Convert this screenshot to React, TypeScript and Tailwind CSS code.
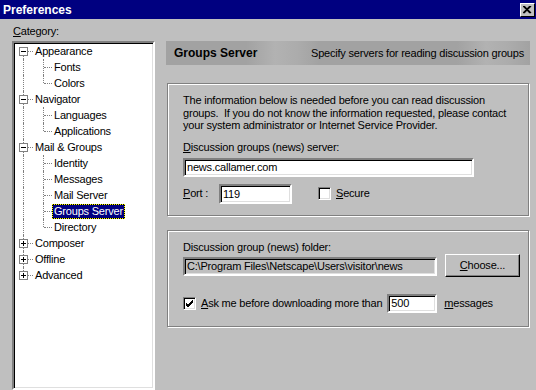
import React from 'react';

const sunken =
    'border border-t-[#808080] border-l-[#808080] border-r-white border-b-white shadow-[inset_1px_1px_0_#000,inset_-1px_-1px_0_#dfdfdf]';
const etched = 'border border-[#808080] shadow-[inset_1px_1px_0_#fff,1px_1px_0_#fff]';

type Item = { label: string; level: 0 | 1; sign?: '-' | '+'; lastChild?: boolean; selected?: boolean };

const items: Item[] = [
    { label: 'Appearance', level: 0, sign: '-' },
    { label: 'Fonts', level: 1 },
    { label: 'Colors', level: 1, lastChild: true },
    { label: 'Navigator', level: 0, sign: '-' },
    { label: 'Languages', level: 1 },
    { label: 'Applications', level: 1, lastChild: true },
    { label: 'Mail & Groups', level: 0, sign: '-' },
    { label: 'Identity', level: 1 },
    { label: 'Messages', level: 1 },
    { label: 'Mail Server', level: 1 },
    { label: 'Groups Server', level: 1, selected: true },
    { label: 'Directory', level: 1, lastChild: true },
    { label: 'Composer', level: 0, sign: '+' },
    { label: 'Offline', level: 0, sign: '+' },
    { label: 'Advanced', level: 0, sign: '+' },
]

const Expander = ({ sign }: { sign: '-' | '+' }) => (
    <span className="absolute left-[5px] top-[4px] w-[9px] h-[9px] border border-[#808080] bg-white">
        <span className="absolute left-[1px] top-[3px] w-[5px] h-px bg-black" />
        {sign === '+' && <span className="absolute left-[3px] top-[1px] w-px h-[5px] bg-black" />}
    </span>
)

const TreeRow = ({ item, index }: { item: Item; index: number }) => {
    const first = index === 0
    const last = index === items.length - 1
    return (
        <div className="relative h-4 flex items-center">
            <span
                className={`absolute left-[9px] border-l border-dotted border-[#808080] ${first ? 'top-[8px] bottom-0' : last ? 'top-0 h-[8px]' : 'top-0 bottom-0'}`}
            />
            {item.level === 0 ? (
                <>
                    <span className="absolute left-[14px] top-[8px] w-[5px] border-t border-dotted border-[#808080]" />
                    <Expander sign={item.sign!} />
                    <span className="pl-[21px] text-black">{item.label}</span>
                </>
            ) : (
                <>
                    <span
                        className={`absolute left-[29px] top-0 border-l border-dotted border-[#808080] ${item.lastChild ? 'h-[8px]' : 'bottom-0'}`}
                    />
                    <span className="absolute left-[30px] top-[8px] w-[8px] border-t border-dotted border-[#808080]" />
                    {item.selected ? (
                        <span className="ml-[38px] bg-black">
                            <span className="block px-[1px] leading-[13px] bg-[#000080] bg-clip-padding text-white border border-dotted border-[#ffff00]">
                                {item.label}
                            </span>
                        </span>
                    ) : (
                        <span className="ml-[38px] px-[2px] leading-[14px] text-black">{item.label}</span>
                    )}
                </>
            )}
        </div>
    )
}

const Checkbox = ({ checked }: { checked?: boolean }) => (
    <span className={`relative inline-block w-[13px] h-[13px] bg-white ${sunken}`}>
        {checked && (
            <svg className="absolute left-[1px] top-[1px]" width="9" height="9" viewBox="0 0 9 9">
                <path d="M1 4 L3 6 L8 1 M1 5 L3 7 L8 2 M1 6 L3 8 L8 3" stroke="#000" strokeWidth="1" fill="none" />
            </svg>
        )}
    </span>
)

export default function App() {
    return (
        <div
            className="w-[536px] h-[390px] overflow-hidden bg-[#bfbfbf] text-[11px] tracking-[-0.2px] text-black flex flex-col"
            style={{ fontFamily: '"Liberation Sans", Arial, sans-serif' }}
        >
            {/* title bar */}
            <div className="h-[19px] bg-[#000080] flex items-center justify-between pl-[3px] pr-[1px]">
                <span className="text-white font-bold text-[12px] tracking-normal">Preferences</span>
                <span className="w-[15px] h-[14px] bg-[#bfbfbf] border border-t-white border-l-white border-r-black border-b-black flex items-center justify-center">
                    <svg width="9" height="8" viewBox="0 0 9 8">
                        <path d="M1 0 L8 7 M0 0 L7 7 M8 0 L1 7 M7 0 L0 7" stroke="#000" strokeWidth="1.2" />
                    </svg>
                </span>
            </div>

            <div className="flex flex-1 min-h-0">
                {/* category tree */}
                <div className="ml-[12px] w-[143px] flex flex-col">
                    <div className="h-[22px] pt-[6px] pl-[1px] leading-[13px]">
                        <span className="underline">C</span>ategory:
                    </div>
                    <div className={`flex-1 bg-white ${sunken} border-[2px] h-[348px]`}>
                        {items.map((it, i) => <TreeRow key={it.label} item={it} index={i} />)}
                    </div>
                </div>

                {/* right side */}
                <div className="ml-[11px] w-[364px] pt-[22px] flex flex-col">
                    <div className="h-[24px] flex items-center whitespace-nowrap bg-[linear-gradient(90deg,#a2a2a2_0%,#a2a2a2_22%,#b2b2b2_30%,#acacac_36%,#a2a2a2_42%,#a2a2a2_80%,#b2b2b2_88%,#acacac_94%,#a2a2a2_100%)]">
                        <span className="w-[145px] pl-[8px] font-bold text-[12px] tracking-normal">Groups Server</span>
                        <span>Specify servers for reading discussion groups</span>
                    </div>

                    <div className={`mt-[18px] ml-px w-[362px] h-[133px] ${etched} pl-[15px] pt-[10px]`}>
                        <p className="leading-[12.5px] w-[340px]">
                            The information below is needed before you can read discussion groups.&nbsp; If you do not know the information requested, please contact your system administrator or Internet Service Provider.
                        </p>
                        <div className="mt-[9px] leading-[13px]">
                            <span className="underline">D</span>iscussion groups (news) server:
                        </div>
                        <div className={`mt-[4px] w-[291px] h-[19px] bg-white ${sunken} border-[2px] pl-[2px] leading-[15px]`}>
                            news.callamer.com
                        </div>
                        <div className="mt-[7px] flex items-center h-[20px]">
                            <span className="w-[36px]"><span className="underline">P</span>ort :</span>
                            <span className={`w-[73px] h-[20px] bg-white ${sunken} border-[2px] pl-[2px] leading-[16px]`}>119</span>
                            <span className="ml-[26px] flex items-center gap-[5px]">
                                <Checkbox />
                                <span><span className="underline">S</span>ecure</span>
                            </span>
                        </div>
                    </div>

                    <div className={`mt-[14px] ml-px w-[362px] h-[97px] ${etched} pl-[15px] pt-[10px]`}>
                        <div className="leading-[13px]">Discussion group (news) folder:</div>
                        <div className="mt-[3px] flex items-start">
                            <div className={`w-[254px] h-[19px] bg-[#bfbfbf] ${sunken} border-[2px] pl-[2px] leading-[15px]`}>
                                C:\Program Files\Netscape\Users\visitor\news
                            </div>
                            <button className="ml-[8px] -mt-[3px] w-[75px] h-[23px] bg-[#bfbfbf] border border-t-white border-l-white border-r-black border-b-black shadow-[inset_-1px_-1px_0_#808080] text-[11px]">
                                <span className="underline">C</span>hoose...
                            </button>
                        </div>
                        <div className="mt-[17px] flex items-center h-[19px]">
                            <Checkbox checked />
                            <span className="ml-[5px]"><span className="underline">A</span>sk me before downloading more than</span>
                            <span className={`ml-[5px] w-[50px] h-[19px] bg-white ${sunken} border-[2px] pl-[2px] leading-[15px]`}>500</span>
                            <span className="ml-[7px]"><span className="underline">m</span>essages</span>
                        </div>
                    </div>
                </div>
            </div>
        </div>
    )
}
